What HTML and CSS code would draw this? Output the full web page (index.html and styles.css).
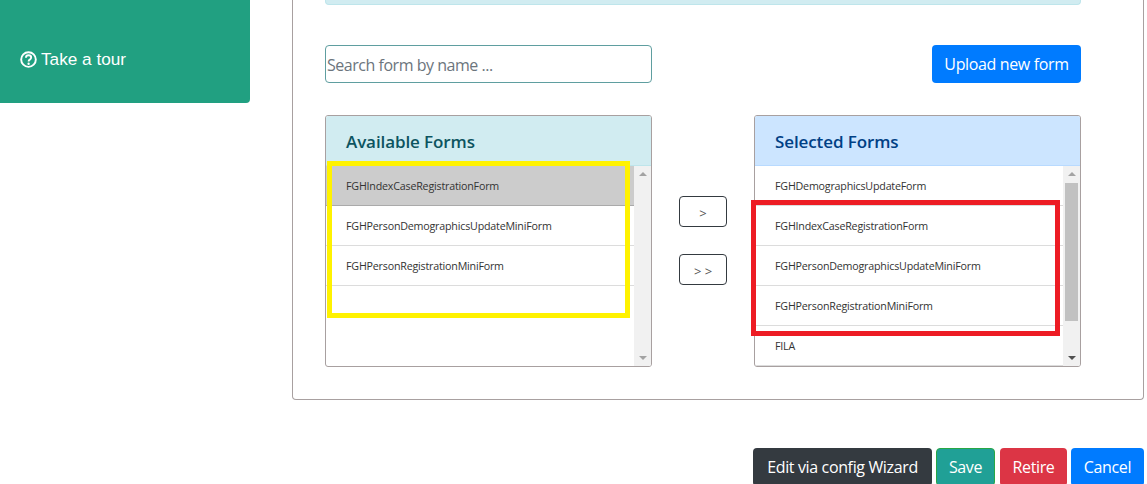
FILE: index.html
```html
<!DOCTYPE html>
<html lang="en">
<head>
<meta charset="utf-8">
<title>Forms</title>
<link rel="stylesheet" href="styles.css">
</head>
<body>
<div class="page">
  <aside class="sidebar">
    <a class="tour">
      <svg class="tour-icon" viewBox="0 0 16 16" aria-hidden="true"><circle cx="8" cy="8" r="6.9" fill="none" stroke="currentColor" stroke-width="1.8"/><path d="M5.6 6.3c0-1.4 1-2.3 2.5-2.3s2.4.9 2.4 2.1c0 1-.6 1.5-1.3 2-.7.4-1 .7-1 1.4v.3" fill="none" stroke="currentColor" stroke-width="1.8"/><circle cx="8.1" cy="12" r="1.1" fill="currentColor"/></svg>
      <span>Take a tour</span>
    </a>
  </aside>
  <main class="content">
    <section class="card">
      <div class="alert"></div>
      <div class="toolbar">
        <input class="search" type="text" placeholder="Search form by name ...">
        <button class="btn btn-blue upload">Upload new form</button>
      </div>
      <div class="picker">
        <div class="panel panel-available">
          <h3 class="panel-head">Available Forms</h3>
          <div class="panel-body">
            <ul class="list">
              <li class="row row-active">FGHIndexCaseRegistrationForm</li>
              <li class="row">FGHPersonDemographicsUpdateMiniForm</li>
              <li class="row">FGHPersonRegistrationMiniForm</li>
            </ul>
            <div class="scrollbar">
              <span class="arrow-up"></span>
              <span class="track"></span>
              <span class="arrow-down"></span>
            </div>
          </div>
        </div>
        <div class="movers">
          <button class="mover">&gt;</button>
          <button class="mover">&gt; &gt;</button>
        </div>
        <div class="panel panel-selected">
          <h3 class="panel-head">Selected Forms</h3>
          <div class="panel-body">
            <ul class="list">
              <li class="row">FGHDemographicsUpdateForm</li>
              <li class="row">FGHIndexCaseRegistrationForm</li>
              <li class="row">FGHPersonDemographicsUpdateMiniForm</li>
              <li class="row">FGHPersonRegistrationMiniForm</li>
              <li class="row">FILA</li>
            </ul>
            <div class="scrollbar">
              <span class="arrow-up"></span>
              <span class="track"><span class="thumb"></span></span>
              <span class="arrow-down dark"></span>
            </div>
          </div>
        </div>
        <div class="mark mark-yellow"></div>
        <div class="mark mark-red"></div>
      </div>
    </section>
    <div class="actions">
      <button class="btn btn-dark">Edit via config Wizard</button>
      <button class="btn btn-teal">Save</button>
      <button class="btn btn-red">Retire</button>
      <button class="btn btn-blue btn-cancel">Cancel</button>
    </div>
  </main>
</div>
</body>
</html>
```
FILE: styles.css
```css
* { box-sizing: border-box; }
html, body { margin: 0; height: 484px; overflow: hidden; background: #fff; }
body { font-family: "Open Sans", "Noto Sans", sans-serif; color: #212529; }
.page { display: flex; align-items: flex-start; }
.sidebar { width: 250px; height: 103px; background: #21a081; border-radius: 0 0 4px 0; padding: 48px 0 0 20px; flex: none; }
.tour { display: flex; align-items: center; gap: 4px; color: #fff; font: 17.2px/22px "Liberation Sans", Arial, sans-serif; }
.tour-icon { width: 17px; height: 17px; }
.content { width: 852px; margin-left: 42px; flex: none; }
.card { height: 400px; border: 1px solid #a8a0a0; border-top: 0; border-radius: 0 0 4px 4px; padding: 0 62px 0 32px; }
.alert { height: 5px; background: #d1ecf1; border: 1px solid #bee5eb; border-top: 0; border-radius: 0 0 4px 4px; }
.toolbar { display: flex; justify-content: space-between; margin-top: 40px; }
.search { width: 327px; height: 38px; border: 1px solid #5f9ea0; border-radius: 4px; padding: 1px 1px 0; font: 16px "Open Sans", sans-serif; letter-spacing: -0.47px; outline: 0; }
.search::placeholder { color: #6c757d; opacity: 1; }
.btn { height: 38px; border: 1px solid transparent; border-radius: 4px; padding: 0; color: #fff; font: 16px/34px "Open Sans", sans-serif; letter-spacing: -0.36px; white-space: nowrap; text-align: center; }
.btn-blue { background: #007bff; }
.upload { width: 149px; }
.btn-dark { background: #343a40; width: 179px; }
.btn-teal { background: #20a096; border-color: #28a745; width: 59px; margin-right: 1px; }
.btn-red { background: #dc3545; width: 67px; }
.btn-cancel { width: 73px; }
.picker { position: relative; display: flex; margin-top: 32px; height: 252px; }
.panel { width: 327px; height: 252px; border: 1px solid #a8a0a0; border-radius: 3px; display: flex; flex-direction: column; overflow: hidden; }
.panel-head { margin: 0; height: 50px; padding: 0 20px; font: 600 17px/52px "Open Sans", sans-serif; letter-spacing: -0.1px; flex: none; }
.panel-available .panel-head { background: #d1ecf1; color: #0c5460; border-bottom: 1px solid #bee5eb; }
.panel-selected .panel-head { background: #cce5ff; color: #004085; border-bottom: 1px solid #b8daff; }
.panel-body { display: flex; flex: 1; min-height: 0; }
.list { list-style: none; margin: 0; padding: 0; flex: 1; min-width: 0; }
.row { height: 40px; padding: 0 20px; border-bottom: 1px solid #dcdcdc; font-size: 10.7px; letter-spacing: -0.2px; line-height: 40px; color: #333; white-space: nowrap; }
.row-active { background: #cccccc; border-bottom-color: #aaa; }
.scrollbar { width: 17px; flex: none; background: #f1f1f1; display: flex; flex-direction: column; align-items: center; }
.track { flex: 1; align-self: stretch; }
.thumb { display: block; height: 138px; background: #c1c1c1; margin: 1px 2px 0; }
.arrow-up, .arrow-down { width: 0; height: 0; flex: none; border-left: 4px solid transparent; border-right: 4px solid transparent; margin: 6px 0; }
.arrow-up { border-bottom: 4px solid #a3a3a3; }
.arrow-down { border-top: 4px solid #a3a3a3; }
.arrow-down.dark { border-top-color: #505050; }
.movers { width: 102px; display: flex; flex-direction: column; align-items: center; padding-top: 81px; gap: 27px; }
.mover { width: 48px; height: 31px; padding: 2px 0 0; background: #fff; border: 1px solid #343a40; border-radius: 4px; color: #555; font: 13px "Open Sans", sans-serif; }
.mark { position: absolute; }
.mark-yellow { left: 2px; top: 46px; width: 303px; height: 157px; border: 5px solid #fff200; }
.mark-red { left: 426px; top: 85px; width: 309px; height: 136px; border: 5px solid #ed1c24; }
.actions { display: flex; justify-content: flex-end; gap: 4px; margin-top: 48px; }
```
